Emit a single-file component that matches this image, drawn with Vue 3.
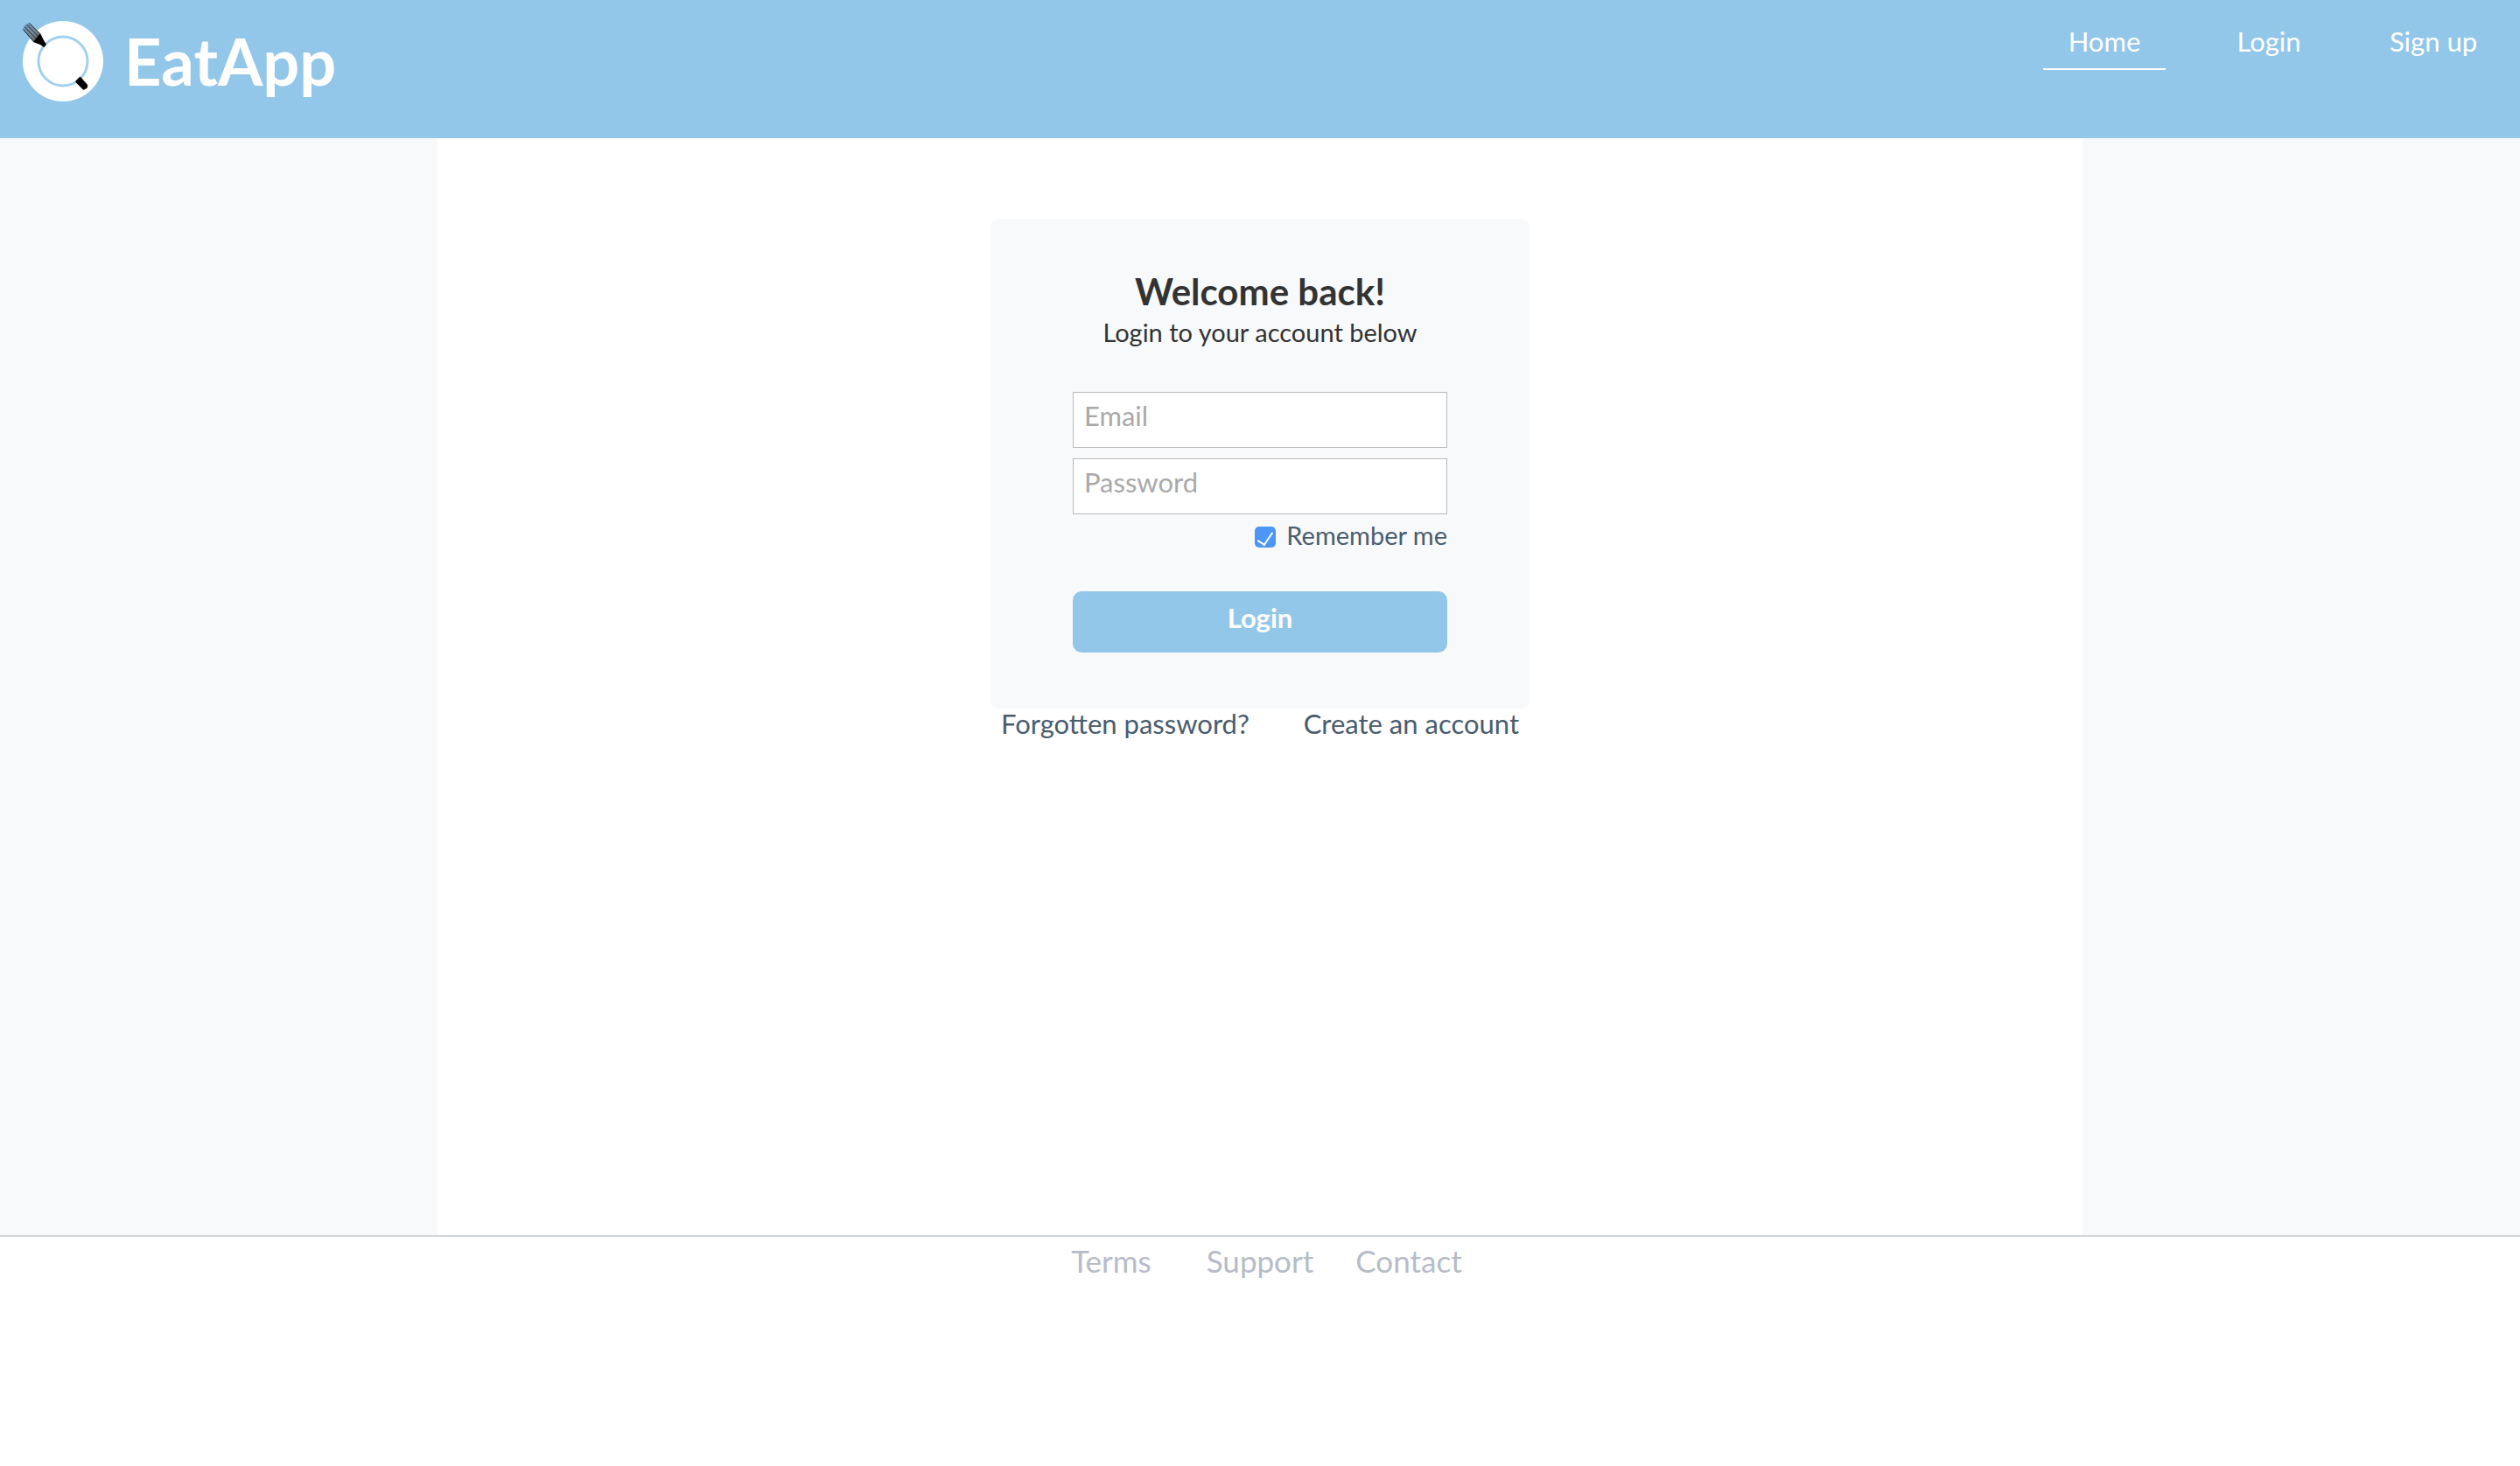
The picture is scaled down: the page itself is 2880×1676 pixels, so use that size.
<script setup>
import { ref } from 'vue'

const navLinks = [
  { label: 'Home', active: true },
  { label: 'Login', active: false },
  { label: 'Sign up', active: false },
]
const footerLinks = ['Terms', 'Support', 'Contact']

const email = ref('')
const password = ref('')
const remember = ref(true)
</script>

<template>
  <div class="page">
    <header class="header">
      <a class="brand" href="#" aria-label="EatApp">
        <svg class="plate" viewBox="0 0 96 96" aria-hidden="true">
          <circle cx="48" cy="50" r="46" fill="#fff" />
          <circle cx="48" cy="50" r="28" fill="none" stroke="#a3d0ee" stroke-width="3" />
          <!-- fork head -->
          <defs>
            <linearGradient id="tines" x1="5" y1="9" x2="19" y2="25" gradientUnits="userSpaceOnUse">
              <stop offset="0" stop-color="#5c88a5" />
              <stop offset="0.6" stop-color="#6b7780" />
              <stop offset="1" stop-color="#555" />
            </linearGradient>
          </defs>
          <path d="M10 6 L22 18 L18 29 L14 28 L2 14 Q3 8 10 6Z" fill="url(#tines)" />
          <path d="M9.500 6.500 L21 18 M7 8.500 L19 21 M4.500 11 L17 24 M2.500 13.500 L14 27" stroke="#2f4452" stroke-width="1" fill="none" />
          <path d="M8.300 7.500 L20 19.500 M5.800 9.800 L18 22.500 M3.500 12.300 L15.500 25.500" stroke="#c3ccd2" stroke-width="0.800" stroke-dasharray="1.500 1.500" fill="none" />
          <path d="M22 18 L26 26 L29 31 L26 34 L22 31 L14 28Z" fill="#000" />
          <!-- end of the handle -->
          <path d="M64 72 L67.500 68.500 L75.500 77.500 L75 80 L71.500 82 L63 73.500Z" fill="#000" stroke="#000" stroke-width="1.500" stroke-linejoin="round" />
        </svg>
        <span class="brand-name">EatApp</span>
      </a>
      <nav class="nav">
        <a
          v-for="link in navLinks"
          :key="link.label"
          href="#"
          class="nav-link"
          :class="{ active: link.active }"
        >{{ link.label }}</a>
      </nav>
    </header>

    <main class="main">
      <div class="content">
        <section class="login">
          <form class="card" @submit.prevent>
            <h1 class="title">Welcome back!</h1>
            <p class="subtitle">Login to your account below</p>
            <input v-model="email" class="field" type="email" placeholder="Email" aria-label="Email" />
            <input v-model="password" class="field" type="password" placeholder="Password" aria-label="Password" />
            <div class="remember">
              <input id="remember" v-model="remember" class="checkbox" type="checkbox" />
              <label for="remember">Remember me</label>
            </div>
            <button class="submit" type="submit">Login</button>
          </form>
          <div class="links">
            <a href="#">Forgotten password?</a>
            <a href="#">Create an account</a>
          </div>
        </section>
      </div>
    </main>

    <footer class="footer">
      <a v-for="label in footerLinks" :key="label" class="footer-link" href="#">{{ label }}</a>
    </footer>
  </div>
</template>

<style>
body {
  margin: 0;
  background: #fff;
}
</style>

<style scoped>
.page {
  display: flex;
  flex-direction: column;
  min-height: 100vh;
  font-family: Lato, sans-serif;
  font-size: 31px;
  color: #333;
}

.page * {
  box-sizing: border-box;
}

a {
  color: inherit;
  text-decoration: none;
}

.header {
  display: flex;
  justify-content: space-between;
  align-items: flex-start;
  min-height: 158px;
  padding: 20px 29px 0 24px;
  background: #93c7ea;
  color: #fff;
}

.brand {
  display: flex;
  align-items: flex-start;
  gap: 22px;
}

.plate {
  display: block;
  width: 96px;
  height: 96px;
}

.brand-name {
  padding-top: 8px;
  font-size: 74px;
  line-height: 84px;
  font-weight: 700;
}

.nav {
  display: flex;
  gap: 48px;
}

.nav-link {
  min-width: 140px;
  height: 60px;
  padding: 8px 0;
  line-height: 38px;
  text-align: center;
  border-bottom: 2px solid transparent;
}

.nav-link.active {
  border-bottom-color: #fff;
}

.main {
  display: flex;
  justify-content: center;
  background: #f7f9fb;
}

.content {
  flex: 0 1 1880px;
  min-height: 1254px;
  padding-top: 92px;
  background: #fff;
}

.login {
  max-width: 616px;
  margin: 0 auto;
}

.card {
  display: flex;
  flex-direction: column;
  padding: 60px 94px 64px;
  border-radius: 10px;
  background: #f7f9fb;
}

.title {
  margin: 0;
  font-size: 42px;
  line-height: 46px;
  font-weight: 700;
  text-align: center;
}

.subtitle {
  margin: 0 0 44px;
  font-size: 29px;
  line-height: 48px;
  text-align: center;
}

.field {
  width: 100%;
  height: 64px;
  margin: 0 0 12px;
  padding: 0 12px 10px;
  border: 1px solid #bbb;
  border-radius: 0;
  background: #fff;
  color: #333;
  font: inherit;
  outline: none;
}

.field::placeholder {
  color: #a9a9a9;
  opacity: 1;
}

.remember {
  display: flex;
  justify-content: flex-end;
  align-items: center;
  gap: 12px;
  height: 28px;
  margin-bottom: 48px;
  font-size: 29px;
  line-height: 28px;
  color: #4a5c6e;
}

.remember label {
  padding-bottom: 4px;
}

.checkbox {
  display: flex;
  justify-content: center;
  appearance: none;
  width: 24px;
  height: 24px;
  margin: 0;
  border: 1px solid #bbb;
  border-radius: 5px;
  background: #fff;
}

.checkbox:checked {
  border: 0;
  background: #4c97f5;
}

.checkbox:checked::after {
  content: '';
  width: 8px;
  height: 16px;
  margin-top: 3px;
  border: solid #fff;
  border-width: 0 2px 2px 0;
  transform: rotate(34deg);
}

.submit {
  height: 70px;
  padding: 0 0 10px;
  border: 0;
  border-radius: 10px;
  background: #93c7ea;
  color: #fff;
  font: inherit;
  font-weight: 700;
}

.links {
  display: flex;
  justify-content: space-between;
  padding: 0 12px;
  line-height: 34px;
  color: #4a5c6e;
}

.footer {
  display: flex;
  justify-content: center;
  padding-top: 8px;
  border-top: 2px solid #d2d6d9;
  background: #fff;
  font-size: 35px;
  line-height: 38px;
  color: #b7bcc8;
}

.footer-link {
  width: 170px;
  text-align: center;
}
</style>
